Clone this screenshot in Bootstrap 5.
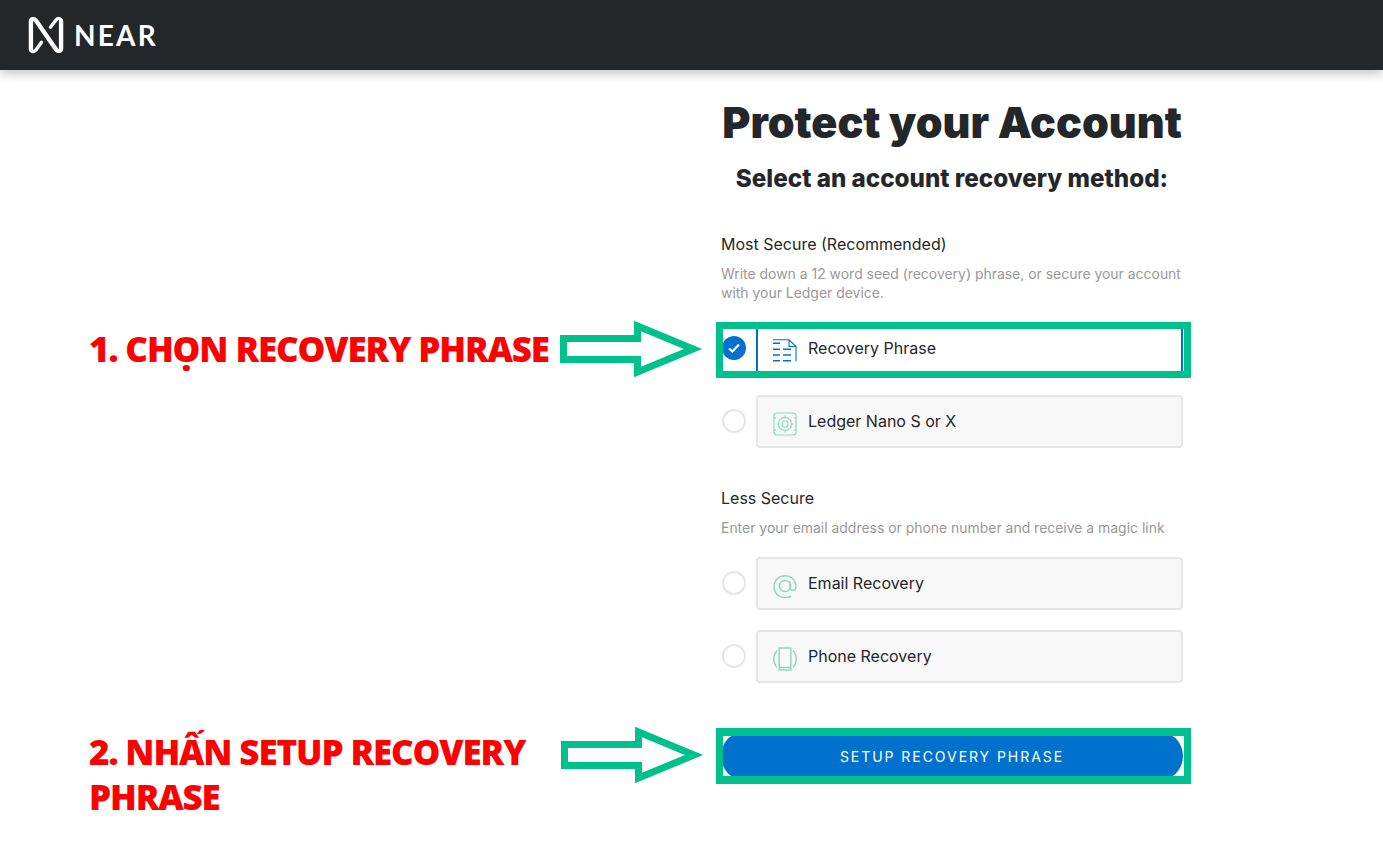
<!DOCTYPE html>
<html lang="en">
<head>
<meta charset="utf-8">
<title>Protect your Account</title>
<link href="https://cdn.jsdelivr.net/npm/bootstrap@5.3.0/dist/css/bootstrap.min.css" rel="stylesheet">
<style>
html,body{height:100%;}
body{font-family:Inter,"Liberation Sans",sans-serif;color:#24272a;background:#fff;position:relative;overflow:hidden;}
.top-bar{height:70px;background:#24272a;box-shadow:0 4px 10px rgba(0,0,0,.22);padding:0 0 0 27px;justify-content:flex-start;}
.brand-word{font-family:Lato,Roboto,sans-serif;font-weight:700;font-size:28px;letter-spacing:2.2px;color:#fff;line-height:1;margin-left:9px;}
.form-col{width:462px;margin-left:721px;}
.main-title{font-size:43px;font-weight:900;line-height:50px;text-align:center;margin:27px 0 0;white-space:nowrap;}
.sub-title{font-size:24.2px;font-weight:800;line-height:30px;text-align:center;margin:17px 0 0;white-space:nowrap;}
.sec-label{font-size:16px;line-height:20px;font-weight:400;margin:0;}
.sec-desc{font-size:13.94px;line-height:19px;color:#999;margin:10px 0 0;}
.option-row{gap:10px;height:53px;}
.radio-dot{width:24px;height:24px;border-radius:50%;border:2px solid #e6e6e6;flex:none;margin:0 0 2px 1px;}
.radio-on{background:#0072ce;border:0;}
.option-box{flex:1;height:53px;background:#f8f8f8;border:2px solid #e6e6e6;border-radius:4px;padding-left:15px;gap:11px;font-size:16px;font-weight:400;}
.option-box svg{margin-top:4px;}
.option-box span{margin-bottom:2px;}
.option-on{background:#fff;border-color:#0072ce;}
.setup-btn{width:462px;height:50px;border-radius:25px;background:#0072ce;border:0;color:#fff;font-size:14px;font-weight:400;letter-spacing:1.95px;}
.setup-btn:hover{background:#0072ce;color:#fff;}
.note-text{position:absolute;left:89px;width:450px;font-family:"Open Sans",sans-serif;font-weight:800;font-size:35px;line-height:45px;color:#f00;letter-spacing:-1.13px;margin:0;}
.mark-frame{position:absolute;left:716px;width:475px;height:56px;border:7px solid #00c08b;}
.mark-frame-tall{border-width:8px 7px;}
.mark-arrow{position:absolute;left:555px;width:150px;height:62px;}
</style>
</head>
<body>
<nav class="navbar top-bar d-flex align-items-center">
  <svg width="38" height="38" viewBox="0 0 34 34" aria-hidden="true">
    <g fill="none" stroke="#fff" stroke-linejoin="round" stroke-linecap="round">
      <path d="M3.5 30V5C3.5 2.5 6.5 2 8 4L26 30C27.5 32 30.5 31.5 30.5 29V4.5" stroke-width="3.9"/>
      <path d="M30.5 4.5C30.5 2 27.5 1.5 26 3.5L21 10M13 23.5L8 30.5C6.5 32.5 3.5 32 3.5 30" stroke-width="3"/>
    </g>
  </svg>
  <span class="brand-word">NEAR</span>
</nav>

<main class="form-col">
  <h1 class="main-title">Protect your Account</h1>
  <h2 class="sub-title">Select an account recovery method:</h2>

  <p class="sec-label" style="margin-top:40px">Most Secure (Recommended)</p>
  <p class="sec-desc">Write down a 12 word seed (recovery) phrase, or secure your account with your Ledger device.</p>

  <div class="d-flex flex-column gap-0" style="margin-top:20px">
    <div class="d-flex align-items-center option-row" style="margin-bottom:20px">
      <span class="radio-dot radio-on d-flex align-items-center justify-content-center">
        <svg width="14" height="12" viewBox="0 0 14 12"><path d="M2 6.5 5.3 9.5 12 2.5" fill="none" stroke="#fff" stroke-width="2.2"/></svg>
      </span>
      <div class="option-box option-on d-flex align-items-center">
        <svg width="24" height="24" viewBox="0 0 24 24" fill="none" stroke="#0072ce" stroke-width="1.1">
          <path d="M0 .8H16L23 7.5V22.5M16 .8V7.5H23"/>
          <path d="M0 4.3H7M0 10.3H7M0 16H7M0 21.7H7M10 10.3H18M10 16H18M10 21.7H18" stroke-width="1.4"/>
        </svg>
        <span>Recovery Phrase</span>
      </div>
    </div>
    <div class="d-flex align-items-center option-row">
      <span class="radio-dot"></span>
      <div class="option-box d-flex align-items-center">
        <svg width="24" height="24" viewBox="0 0 24 24" fill="none" stroke="#8fd9bf" stroke-width="1.2">
          <rect x="1" y="1" width="22" height="22" rx="2.5"/>
          <circle cx="12" cy="12" r="6.6"/><circle cx="12" cy="12" r="3"/>
          <path d="M12 3.5V5.4M12 18.6V20.5M3.5 12H5.4M18.6 12H20.5M1 6H3M1 18H3M21 6H23M21 18H23"/>
        </svg>
        <span>Ledger Nano S or X</span>
      </div>
    </div>
  </div>

  <p class="sec-label" style="margin-top:40px">Less Secure</p>
  <p class="sec-desc">Enter your email address or phone number and receive a magic link</p>

  <div class="d-flex flex-column" style="margin-top:20px">
    <div class="d-flex align-items-center option-row" style="margin-bottom:20px">
      <span class="radio-dot"></span>
      <div class="option-box d-flex align-items-center">
        <svg width="24" height="24" viewBox="0 0 24 24" fill="none" stroke="#8fd9bf" stroke-width="1.5">
          <path d="M18 22A11 11 0 1 1 23 12C23 15 21.5 16.5 19.5 16.5C17.8 16.5 17 15.3 17 13.5V7.5"/>
          <circle cx="12" cy="12" r="5.6"/>
        </svg>
        <span>Email Recovery</span>
      </div>
    </div>
    <div class="d-flex align-items-center option-row">
      <span class="radio-dot"></span>
      <div class="option-box d-flex align-items-center">
        <svg width="24" height="24" viewBox="0 0 24 24" fill="none" stroke="#8fd9bf" stroke-width="1.5">
          <rect x="6.2" y="1" width="11.6" height="22"/>
          <path d="M6.2 20.5H17.8M4 3.5C-.2 8-.2 16 4 20.5M20 3.5C24.2 8 24.2 16 20 20.5"/>
        </svg>
        <span>Phone Recovery</span>
      </div>
    </div>
  </div>

  <button type="button" class="btn setup-btn d-block" style="margin-top:48px">SETUP RECOVERY PHRASE</button>
</main>

<p class="note-text" style="top:326px;width:480px;white-space:nowrap">1. CHỌN RECOVERY PHRASE</p>
<p class="note-text" style="top:729px">2. NHẤN SETUP RECOVERY PHRASE</p>

<div class="mark-frame" style="top:322px"></div>
<div class="mark-frame mark-frame-tall" style="top:728px"></div>

<svg class="mark-arrow" style="top:318px" viewBox="555 318 150 62" aria-hidden="true">
  <polygon points="563.5,338.5 637.5,338.5 637.5,326 693,349 637.5,372 637.5,359.5 563.5,359.5" fill="#fff" stroke="#00c08b" stroke-width="7"/>
</svg>
<svg class="mark-arrow" style="top:724px" viewBox="555 318 150 62" aria-hidden="true">
  <polygon points="564.5,338.5 638.5,338.5 638.5,326 694,349 638.5,372 638.5,359.5 564.5,359.5" fill="#fff" stroke="#00c08b" stroke-width="7"/>
</svg>
</body>
</html>
